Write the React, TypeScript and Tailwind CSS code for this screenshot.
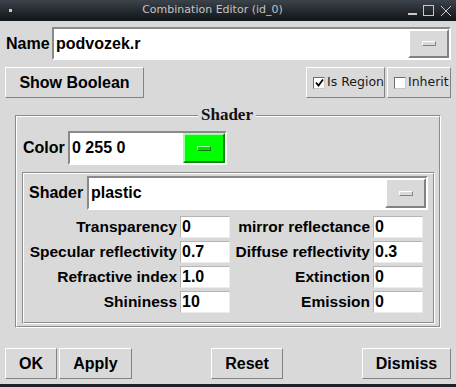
import React from "react";

const sans = "font-['Liberation_Sans',Arial,sans-serif]";
const deja = "font-['DejaVu_Sans',sans-serif]";

const raised =
  "border border-t-white border-l-white border-b-[#828282] border-r-[#828282]";
const sunken =
  "border-2 border-t-[#8a8a8a] border-l-[#8a8a8a] border-b-white border-r-white";

function Indicator({ green }: { green?: boolean }) {
  return (
    <div
      className={
        green
          ? "w-[14px] h-[5px] bg-[#00e000] border border-t-[#a0ffa0] border-l-[#a0ffa0] border-b-[#008000] border-r-[#008000]"
          : "w-[14px] h-[5px] bg-[#d9d9d9] border border-t-white border-l-white border-b-[#828282] border-r-[#828282]"
      }
    />
  );
}

function MenuBtn({ w, green }: { w: number; green?: boolean }) {
  return (
    <div
      style={{ width: w }}
      className={
        green
          ? "h-full flex items-center justify-center bg-[#00ff00] border-2 border-t-[#a0ffa0] border-l-[#a0ffa0] border-b-[#008a00] border-r-[#008a00]"
          : "h-full flex items-center justify-center bg-[#d9d9d9] border-2 border-t-white border-l-white border-b-[#828282] border-r-[#828282]"
      }
    >
      <Indicator green={green} />
    </div>
  );
}

function Btn({ label, w }: { label: string; w: number }) {
  return (
    <div
      style={{ width: w }}
      className={`h-[31px] flex items-center justify-center bg-[#d9d9d9] ${raised} ${sans} font-bold text-[16px] text-black whitespace-nowrap`}
    >
      {label}
    </div>
  );
}

function Check({ label, checked, w }: { label: string; checked?: boolean; w: number }) {
  return (
    <div
      style={{ width: w }}
      className={`h-[31px] flex items-center pl-[6px] gap-[2px] ${raised} ${deja} text-[12.5px] text-[#1a1a1a] whitespace-nowrap`}
    >
      <div className="w-[12px] h-[12px] shrink-0 bg-white border border-t-[#6e6e6e] border-l-[#6e6e6e] border-b-[#c8c8c8] border-r-[#c8c8c8] flex items-center justify-center">
        {checked && (
          <svg width="9" height="9" viewBox="0 0 9 9">
            <path d="M1 4.5 L3.5 7.5 L8 1.5" stroke="#000" strokeWidth="1.8" fill="none" />
          </svg>
        )}
      </div>
      <span>{label}</span>
    </div>
  );
}

function Groove({ className, children }: { className?: string; children: React.ReactNode }) {
  return (
    <div className={`border border-t-[#8a8a8a] border-l-[#8a8a8a] border-b-white border-r-white ${className ?? ""}`}>
      <div className="h-full border border-t-white border-l-white border-b-[#8a8a8a] border-r-[#8a8a8a]">
        {children}
      </div>
    </div>
  );
}

function Field({ value }: { value: string }) {
  return (
    <div className="w-[50px] h-[22px] bg-white border border-t-[#b4b4b4] border-l-[#b4b4b4] border-b-[#ececec] border-r-[#ececec] pl-[1px] flex items-center text-[16px] font-bold">
      {value}
    </div>
  );
}

const params = [
  ["Transparency", "0", "mirror reflectance", "0"],
  ["Specular reflectivity", "0.7", "Diffuse reflectivity", "0.3"],
  ["Refractive index", "1.0", "Extinction", "0"],
  ["Shininess", "10", "Emission", "0"],
];

export default function App() {
  return (
    <div className="w-[456px] h-[387px] overflow-hidden bg-[#d9d9d9] flex flex-col">
      {/* title bar */}
      <div className="h-[21px] shrink-0 flex items-center bg-gradient-to-b from-[#3d434b] to-[#121518] relative">
        <div className="ml-[9px] w-[3px] h-[3px] bg-[#c8c8c8]" />
        <div className={`flex-1 text-center ${deja} text-[11px] text-[#c4c4c4] -ml-[12px] pl-[17px]`}>
          Combination Editor (id_0)
        </div>
        <div className="flex items-center gap-[6px] mr-[4px]">
          <div className="w-[9px] h-[11px] flex items-end pb-[1px]">
            <div className="w-[9px] h-[2px] bg-[#c8c8c8]" />
          </div>
          <div className="w-[11px] h-[11px] border border-[#c8c8c8]" />
          <svg width="12" height="12" viewBox="0 0 12 12">
            <path d="M1 1 L11 11 M11 1 L1 11" stroke="#c8c8c8" strokeWidth="1" />
          </svg>
        </div>
      </div>

      <div className={`flex-1 flex flex-col ${sans} text-black`}>
        {/* name row */}
        <div className="mt-[6px] h-[33px] flex items-center">
          <span className="ml-[6px] w-[46px] text-[16px] font-bold">Name</span>
          <div className={`flex-1 mr-[5px] h-full flex ${sunken}`}>
            <div className="flex-1 bg-white pl-[2px] flex items-center text-[16px] font-bold">
              podvozek.r
            </div>
            <MenuBtn w={41} />
          </div>
        </div>

        {/* show boolean row */}
        <div className="mt-[7px] flex items-center">
          <div className="ml-[5px]">
            <Btn label="Show Boolean" w={139} />
          </div>
          <div className="ml-auto mr-[5px] flex gap-[2px]">
            <Check label="Is Region" checked w={79} />
            <Check label="Inherit" w={64} />
          </div>
        </div>

        {/* shader labelframe */}
        <div className="mt-[17px] mx-[15px] h-[213px] relative">
          <Groove className="h-full">
            <div className="flex flex-col h-full">
              <div className="mt-[14px] ml-[6px] h-[34px] flex items-center">
                <span className="w-[45px] text-[16px] font-bold">Color</span>
                <div className={`h-full flex ${sunken}`}>
                  <div className="w-[113px] bg-white pl-[2px] flex items-center text-[16px] font-bold">
                    0 255 0
                  </div>
                  <MenuBtn w={42} green />
                </div>
              </div>

              <Groove className="mt-[7px] ml-[5px] mr-[4px] h-[152px]">
                <div className="flex flex-col">
                  <div className="mt-[2px] ml-[5px] mr-[5px] h-[34px] flex items-center">
                    <span className="w-[58px] text-[16px] font-bold">Shader</span>
                    <div className={`flex-1 h-full flex ${sunken}`}>
                      <div className="flex-1 bg-white pl-[2px] flex items-center text-[16px] font-bold">
                        plastic
                      </div>
                      <MenuBtn w={41} />
                    </div>
                  </div>

                  <div className="mt-[6px] grid grid-cols-[153px_50px_137px_50px] gap-x-[3px] gap-y-[3px] text-[15.5px] font-bold whitespace-nowrap">
                    {params.map((r) => (
                      <React.Fragment key={r[0]}>
                        <div className="h-[22px] flex items-center justify-end">{r[0]}</div>
                        <Field value={r[1]} />
                        <div className="h-[22px] flex items-center justify-end">{r[2]}</div>
                        <Field value={r[3]} />
                      </React.Fragment>
                    ))}
                  </div>
                </div>
              </Groove>
            </div>
          </Groove>
          <div className="absolute -top-[9px] left-[183px] px-[3px] bg-[#d9d9d9] font-['Liberation_Serif',serif] font-bold text-[17px] leading-[18px] text-[#111]">
            Shader
          </div>
        </div>

        {/* bottom buttons */}
        <div className="mt-[20px] flex items-center px-[5px]">
          <Btn label="OK" w={52} />
          <div className="ml-[2px]">
            <Btn label="Apply" w={73} />
          </div>
          <div className="ml-[79px]">
            <Btn label="Reset" w={72} />
          </div>
          <div className="ml-auto">
            <Btn label="Dismiss" w={89} />
          </div>
        </div>
      </div>
      <div className="h-[3px] shrink-0 bg-[#1e2226]" />
    </div>
  );
}
